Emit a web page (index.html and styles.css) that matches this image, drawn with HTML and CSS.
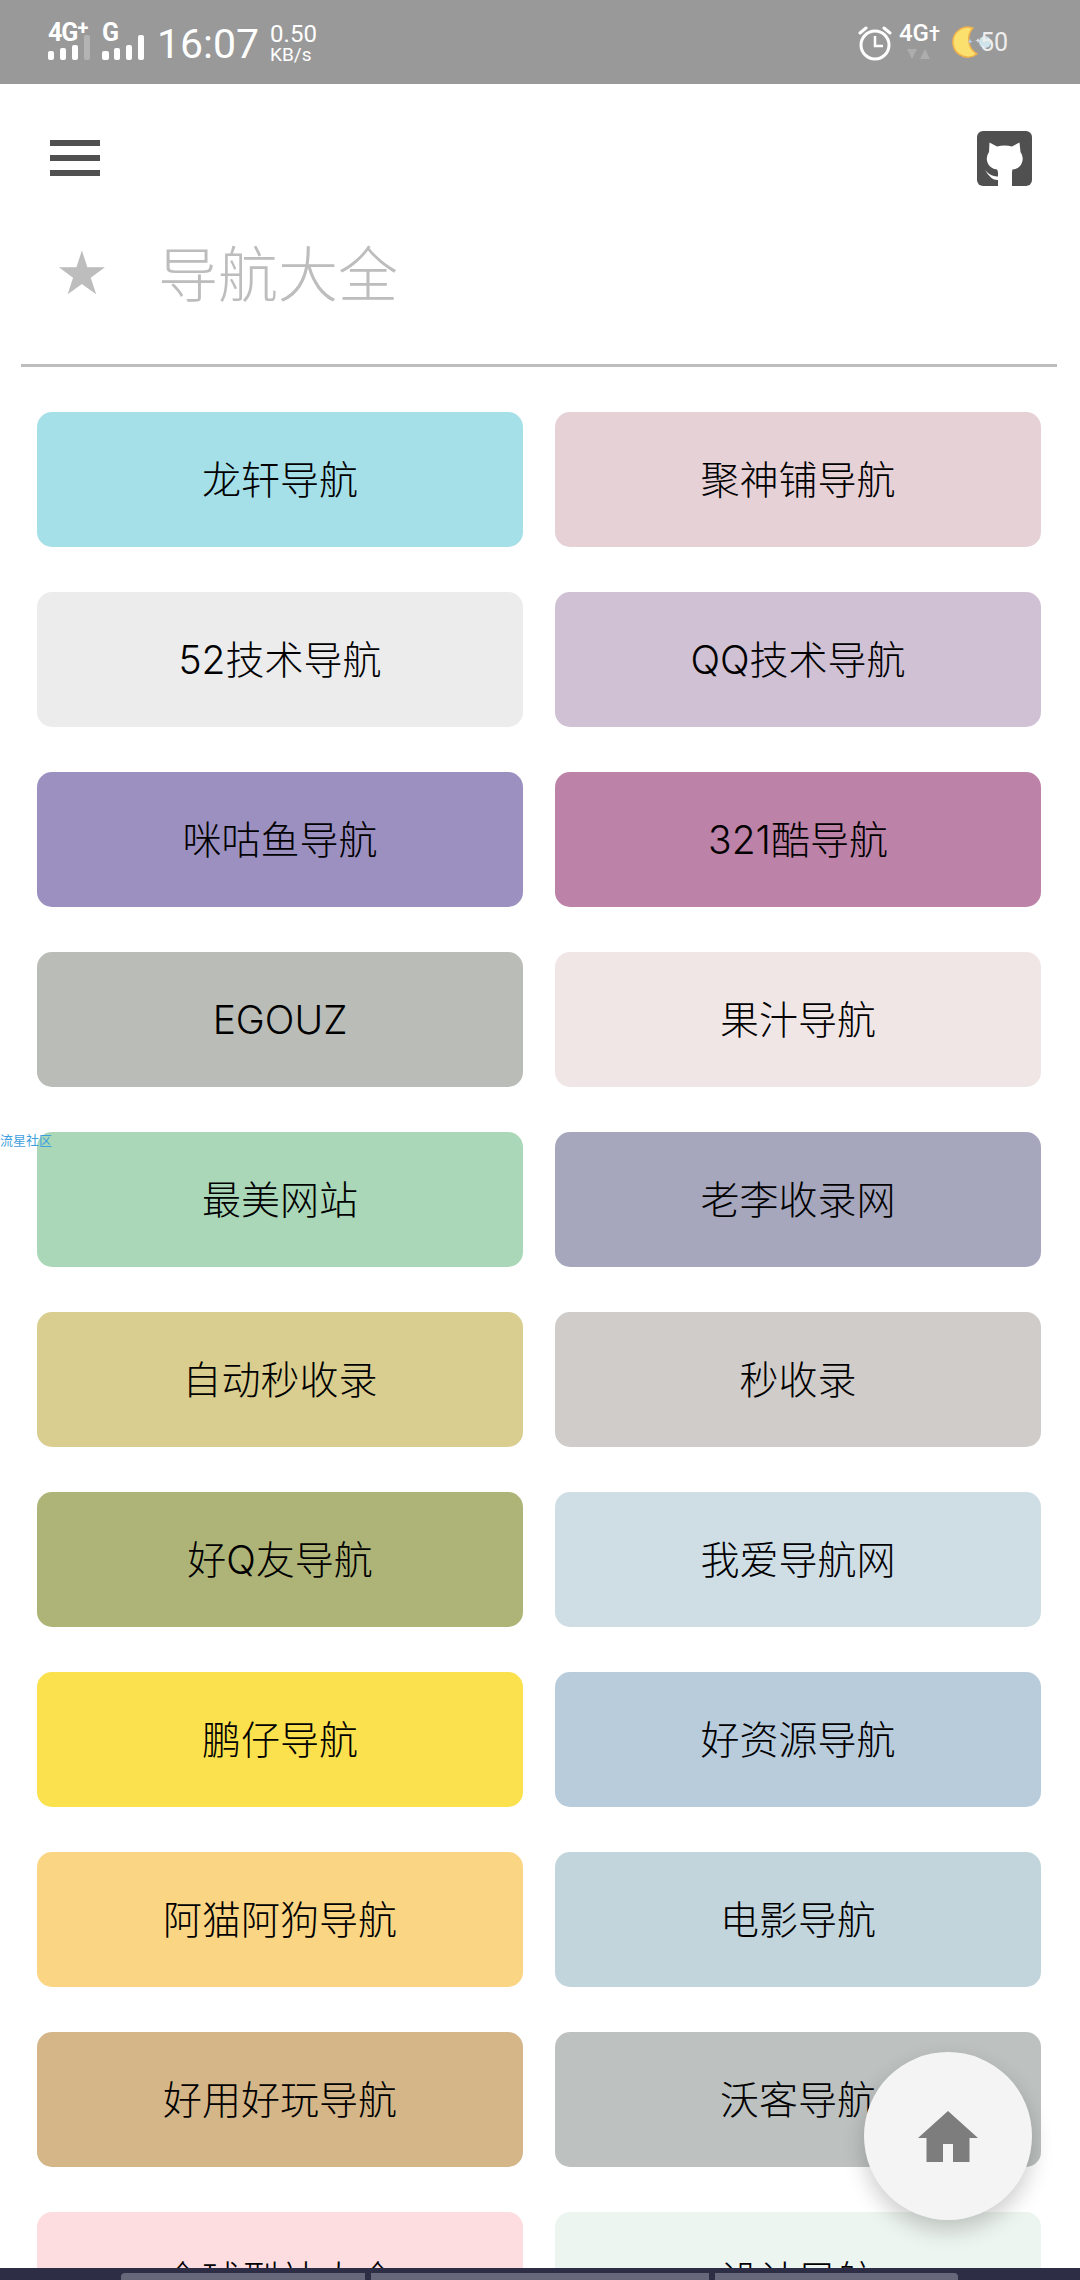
FILE: index.html
```html
<!DOCTYPE html>
<html lang="zh">
<head>
<meta charset="utf-8">
<title>导航大全</title>
<link rel="stylesheet" href="styles.css">
</head>
<body>
<div class="screen">
  <div class="status">
    <div class="status-left">
      <div class="sim">
        <span class="net">4G<sup class="plus">+</sup></span>
        <svg class="bars" width="42" height="25" viewBox="0 0 42 25"><g fill="#fff"><rect x="0" y="16" width="6" height="9" rx="2"/><rect x="12" y="13" width="6" height="12" rx="2"/><rect x="24" y="10" width="6" height="15" rx="2"/></g><rect x="36" y="0" width="6" height="25" rx="2" fill="#b3b3b3"/></svg>
      </div>
      <div class="sim sim2">
        <span class="net">G</span>
        <svg class="bars" width="42" height="25" viewBox="0 0 42 25"><g fill="#fff"><rect x="0" y="16" width="7" height="9" rx="2"/><rect x="12" y="13" width="6" height="12" rx="2"/><rect x="24" y="10" width="6" height="15" rx="2"/><rect x="36" y="0" width="6" height="25" rx="2"/></g></svg>
      </div>
      <span class="clock">16:07</span>
      <div class="speed"><span class="speed-num">0.50</span><span class="speed-unit">KB/s</span></div>
    </div>
    <div class="status-right">
      <svg class="alarm" width="34" height="36" viewBox="0 0 34 36"><g fill="none" stroke="#fff" stroke-width="3"><circle cx="17" cy="20" r="14"/><path d="M17 11v10h8" stroke-width="2.500"/><path d="M2 8l6-5M32 8l-6-5" stroke-linecap="round"/></g></svg>
      <div class="net-right">
        <span class="net-r">4G<span class="plus-r">†</span></span>
        <svg width="24" height="12" viewBox="0 0 24 12"><path d="M0 1h10L5 11zM13 11h10L18 1z" fill="#adadad"/></svg>
      </div>
      <div class="battery">
        <svg class="moon" width="32" height="34" viewBox="0 0 32 34"><path d="M22 3A15 15 0 1 0 26 29 17 17 0 0 1 22 3z" fill="#fbe06e" stroke="#eeb04c" stroke-width="1.500"/><path d="M19 14l1 2 2 .5-2 .5-1 2-1-2-2-.5 2-.5z" fill="#b9cde0"/><path d="M27 13l1 2 2 .5-2 .5-1 2-1-2-2-.5 2-.5z" fill="#dbe3ea"/></svg>
        <span class="batt-dot"></span>
        <span class="batt-num">50</span>
      </div>
    </div>
  </div>

  <div class="toolbar">
    <div class="menu"><i></i><i></i><i></i></div>
    <svg class="gh" width="55" height="55" viewBox="0 0 55 55">
      <rect width="55" height="55" rx="6" fill="#505050"/>
      <path d="M12.500 11.500 20 15.500Q27.500 13.500 35 15.500L42.500 11.500 43.500 21Q47 26 45 31.500 43 37.500 35.500 38.500 35 39.500 35 42V55H21V49Q14 49.500 8 39 14 46 21 45.500V42Q21 39.500 20 38.500 12.500 37.500 10.500 31.500 8.500 26 12 21z" fill="#fff"/>
    </svg>
  </div>

  <div class="heading">
    <span class="star">★</span>
    <h1 class="title">导航大全</h1>
  </div>
  <div class="rule"></div>

  <div class="grid">
    <a class="card c1">龙轩导航</a>
    <a class="card c2">聚神铺导航</a>
    <a class="card c3">52技术导航</a>
    <a class="card c4">QQ技术导航</a>
    <a class="card c5">咪咕鱼导航</a>
    <a class="card c6">321酷导航</a>
    <a class="card c7">EGOUZ</a>
    <a class="card c8">果汁导航</a>
    <a class="card c9">最美网站</a>
    <a class="card c10">老李收录网</a>
    <a class="card c11">自动秒收录</a>
    <a class="card c12">秒收录</a>
    <a class="card c13">好Q友导航</a>
    <a class="card c14">我爱导航网</a>
    <a class="card c15">鹏仔导航</a>
    <a class="card c16">好资源导航</a>
    <a class="card c17">阿猫阿狗导航</a>
    <a class="card c18">电影导航</a>
    <a class="card c19">好用好玩导航</a>
    <a class="card c20">沃客导航</a>
    <a class="card c21">全球型站大全</a>
    <a class="card c22">设计导航</a>
  </div>

  <span class="sidelink">流星社区</span>

  <button class="fab" aria-label="home">
    <svg width="60" height="51" viewBox="0 0 60 51"><path d="M30 0 60 27H51.500V51H35V33H25V51H8.500V27H0z" fill="#7d7d7d"/></svg>
  </button>

  <div class="bottom">
    <span class="seg seg1"></span><span class="seg seg2"></span><span class="seg seg3"></span>
  </div>
</div>
</body>
</html>
```
FILE: styles.css
```css
* { box-sizing: border-box; }
html, body { margin: 0; padding: 0; background: #fff; }
.screen {
  position: relative;
  width: 1080px;
  height: 2280px;
  overflow: hidden;
  font-family: Inter, "Noto Sans CJK SC", sans-serif;
  color: #111;
}
.status {
  height: 84px;
  background: #999;
  color: #fff;
  display: flex;
  justify-content: space-between;
  align-items: center;
  font-family: Roboto, sans-serif;
}
.status-left { display: flex; align-items: center; padding-left: 48px; }
.sim { width: 42px; height: 36px; position: relative; margin-right: 12px; }
.sim .bars { position: absolute; left: 0; bottom: 0; }
.sim2 { margin-right: 13px; }
.net { position: absolute; left: 0; top: -3px; font-size: 25px; font-weight: 700; line-height: 24px; white-space: nowrap; letter-spacing: -1px; }
.plus { font-size: 20px; line-height: 0; vertical-align: 6px; }
.clock { font-size: 41px; line-height: 46px; margin-right: 11px; margin-top: 4px; }
.speed { display: flex; flex-direction: column; margin-top: 2px; }
.speed-num { font-size: 24px; line-height: 22px; }
.speed-unit { font-size: 19px; line-height: 19px; }
.status-right { display: flex; align-items: center; padding-right: 72px; }
.alarm { margin-right: 7px; margin-top: 2px; }
.net-right { display: flex; flex-direction: column; align-items: flex-start; width: 44px; margin-right: 8px; margin-top: -4px; }
.net-r { font-size: 24px; line-height: 24px; font-weight: 500; white-space: nowrap; }
.plus-r { font-size: 20px; }
.net-right svg { margin-left: 8px; margin-top: 2px; }
.battery { display: flex; align-items: center; position: relative; }
.batt-dot { width: 12px; height: 12px; border-radius: 50%; background: #cfe3ea; margin-left: -4px; }
.batt-num { font-size: 25px; margin-left: -11px; color: #eee; }

.toolbar {
  height: 148px;
  display: flex;
  justify-content: space-between;
  align-items: center;
  padding: 0 48px 0 50px;
}
.menu { display: flex; flex-direction: column; gap: 9px; width: 50px; }
.menu i { display: block; height: 6px; background: #505050; }

.heading { display: flex; align-items: center; height: 90px; padding-left: 55px; }
.star { font-size: 60px; line-height: 1; color: #bdbdbd; width: 103px; margin-top: -8px; font-family: "DejaVu Sans", sans-serif; }
.title { margin: -4px 0 0; font-size: 60px; font-weight: 300; color: #bdbdbd; line-height: 90px; }
.rule { height: 3px; background: #bdbdbd; margin: 42px 23px 0 21px; }

.grid {
  display: grid;
  grid-template-columns: 486px 486px;
  grid-auto-rows: 135px;
  column-gap: 32px;
  row-gap: 45px;
  padding: 45px 0 0 37px;
}
.card {
  display: flex;
  align-items: center;
  justify-content: center;
  border-radius: 15px;
  font-size: 39px;
  font-weight: 300;
  line-height: 1;
  color: #000;
  white-space: nowrap;
}
.c1 { background: #a5dfe7; }
.c2 { background: #e5d1d6; }
.c3 { background: #ececec; }
.c4 { background: #d0c2d4; }
.c5 { background: #9b90c0; }
.c6 { background: #bd82a8; }
.c7 { background: #babcb7; }
.c8 { background: #f1e6e6; }
.c9 { background: #a9d7b7; }
.c10 { background: #a6a7bd; }
.c11 { background: #d9ce8f; }
.c12 { background: #d0ccc9; }
.c13 { background: #aeb477; }
.c14 { background: #cfdde5; }
.c15 { background: #fbe14e; }
.c16 { background: #b9ccdc; }
.c17 { background: #f9d584; }
.c18 { background: #c2d5dd; }
.c19 { background: #d4b688; }
.c20 { background: #bdc1c0; }
.c21 { background: #fddde0; }
.c22 { background: #edf5f0; }

.sidelink {
  position: absolute;
  left: 0;
  top: 1131px;
  font-size: 13px;
  line-height: 18px;
  color: #3f9fe0;
}
.fab {
  position: absolute;
  left: 864px;
  top: 2052px;
  width: 168px;
  height: 168px;
  border: 0;
  border-radius: 50%;
  background: #f4f4f4;
  box-shadow: 0 10px 22px rgba(0,0,0,.2);
  display: flex;
  align-items: center;
  justify-content: center;
  padding: 0;
}
.bottom {
  position: absolute;
  left: 0;
  right: 0;
  bottom: 0;
  height: 12px;
  background: #2d2e45;
}
.seg { position: absolute; top: 5px; height: 7px; background: #66687a; }
.seg1 { left: 121px; width: 244px; border-radius: 4px 0 0 0; }
.seg2 { left: 371px; width: 338px; }
.seg3 { left: 715px; width: 243px; border-radius: 0 4px 0 0; }
```
